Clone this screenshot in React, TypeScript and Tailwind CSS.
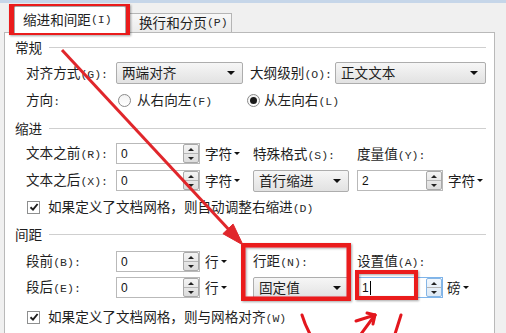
import React from "react";

function Acc({ k }: { k: string }) {
  return (
    <span className="font-['Liberation_Mono',monospace] text-[11.5px] text-[#2a2a2a]">{k}</span>
  );
}

function Tri({ size = "s" }: { size?: "s" | "m" }) {
  return size === "s" ? (
    <span className="inline-block w-0 h-0 ml-[2px] border-l-[3px] border-r-[3px] border-t-[3px] border-l-transparent border-r-transparent border-t-[#111]" />
  ) : (
    <span className="inline-block w-0 h-0 border-l-[4px] border-r-[4px] border-t-[4px] border-l-transparent border-r-transparent border-t-[#111]" />
  );
}

function Section({ title, className }: { title: string; className: string }) {
  return (
    <div className={`flex items-center h-[16px] pl-[10px] pr-[8px] ${className}`}>
      <span>{title}</span>
      <div className="flex-1 ml-[7px] h-[2px] border-t border-t-[#cfcfcf] border-b border-b-white" />
    </div>
  );
}

function Select({ text, w }: { text: string; w: string }) {
  return (
    <div
      className={`flex items-center h-[22px] ${w} border border-[#adadad] rounded-[2px] bg-linear-to-b from-[#f6f6f6] to-[#e2e2e2] pl-[5px] pr-[7px]`}
    >
      <span>{text}</span>
      <span className="ml-auto flex">
        <Tri size="m" />
      </span>
    </div>
  );
}

function Spin({ value, w, focus }: { value: string; w: string; focus?: boolean }) {
  return (
    <div
      className={`flex h-[21px] ${w} border ${focus ? "border-[#7eb4ea]" : "border-[#b9b9b9]"} bg-white`}
    >
      <div className="flex-1 flex items-center pl-[4px] text-[12px] font-['Liberation_Sans',sans-serif] text-[#111]">
        {value}
        {focus && <span className="ml-[1px] w-px h-[14px] bg-black" />}
      </div>
      <div
        className={`w-[16px] flex flex-col border ${focus ? "border-[#86b6e6] from-[#f2f7fc] to-[#dde9f5]" : "border-[#a9a9a9] from-[#f4f4f4] to-[#dcdcdc]"} rounded-[2px] bg-linear-to-b`}
      >
        <div className="flex-1 flex items-center justify-center border-b border-b-[#b5b5b5]">
          <span className="w-0 h-0 border-l-[3px] border-r-[3px] border-b-[3px] border-l-transparent border-r-transparent border-b-[#222]" />
        </div>
        <div className="flex-1 flex items-center justify-center">
          <span className="w-0 h-0 border-l-[3px] border-r-[3px] border-t-[3px] border-l-transparent border-r-transparent border-t-[#222]" />
        </div>
      </div>
    </div>
  );
}

function Radio({ checked }: { checked?: boolean }) {
  return (
    <div className="w-[13px] h-[13px] rounded-full border border-[#8a8a8a] bg-linear-to-b from-[#f2f2f2] to-white flex items-center justify-center">
      {checked && <div className="w-[7px] h-[7px] rounded-full bg-[#1a1a1a]" />}
    </div>
  );
}

function Check() {
  return (
    <div className="w-[13px] h-[13px] border border-[#8e8f8f] bg-white flex items-center justify-center">
      <svg width="10" height="10" viewBox="0 0 10 10">
        <path d="M1.5 5.2 L4 7.6 L8.6 2" stroke="#1c1c1c" strokeWidth="1.9" fill="none" />
      </svg>
    </div>
  );
}

function Unit({ text }: { text: string }) {
  return (
    <div className="w-[53px] pl-[5px] flex items-center">
      <span>{text}</span>
      <Tri />
    </div>
  );
}

export default function App() {
  return (
    <div className="relative w-[506px] h-[333px] overflow-hidden bg-[#f0f0f0] text-[13.6px] leading-none text-[#1e1e1e] font-['Noto_Sans_CJK_SC',sans-serif]">
      <div className="h-[3px] bg-[#c6d6e9]" />
      {/* tabs */}
      <div className="flex items-end h-[29px] pl-[14px]">
        <div className="relative z-10 -mb-px h-[27px] w-[112px] bg-white border-l border-t border-r border-[#a8a8a8] rounded-t-[2px] flex items-center pl-[8px]">
          缩进和间距<Acc k="(I)" />
        </div>
        <div className="ml-[2px] h-[19px] w-[104px] border-l border-t border-r border-[#b5b5b5] bg-linear-to-b from-[#f8f8f8] to-[#ebebeb] flex items-center pl-[10px]">
          换行和分页<Acc k="(P)" />
        </div>
      </div>
      {/* panel */}
      <div className="ml-[4px] w-[491px] h-[320px] border border-[#b9b9b9] bg-white flex flex-col">
        <Section title="常规" className="mt-[7px]" />
        <div className="mt-[6px] h-[22px] pl-[21px] flex items-center">
          <div className="w-[90px]">
            对齐方式<Acc k="(G):" />
          </div>
          <Select text="两端对齐" w="w-[127px]" />
          <div className="ml-[7px] w-[85px]">
            大纲级别<Acc k="(O):" />
          </div>
          <Select text="正文文本" w="w-[151px]" />
        </div>
        <div className="mt-[6px] h-[20px] pl-[21px] flex items-center">
          <div className="w-[92px]">
            方向<Acc k=":" />
          </div>
          <div className="w-[129px] flex items-center gap-[6px]">
            <Radio />
            <span>
              从右向左<Acc k="(F)" />
            </span>
          </div>
          <div className="flex items-center gap-[4px]">
            <Radio checked />
            <span>
              从左向右<Acc k="(L)" />
            </span>
          </div>
        </div>

        <Section title="缩进" className="mt-[11px]" />
        <div className="mt-[6px] h-[21px] pl-[21px] flex items-center">
          <div className="w-[90px]">
            文本之前<Acc k="(R):" />
          </div>
          <Spin value="0" w="w-[84px]" />
          <Unit text="字符" />
          <div className="w-[104px] pt-[2px]">
            特殊格式<Acc k="(S):" />
          </div>
          <div className="pt-[2px]">
            度量值<Acc k="(Y):" />
          </div>
        </div>
        <div className="mt-[6px] h-[21px] pl-[21px] flex items-center">
          <div className="w-[90px]">
            文本之后<Acc k="(X):" />
          </div>
          <Spin value="0" w="w-[84px]" />
          <Unit text="字符" />
          <Select text="首行缩进" w="w-[96px] h-[21px]" />
          <div className="ml-[8px]">
            <Spin value="2" w="w-[86px]" />
          </div>
          <div className="pl-[5px] flex items-center">
            <span>字符</span>
            <Tri />
          </div>
        </div>
        <div className="mt-[8px] h-[16px] pl-[22px] flex items-center gap-[8px]">
          <Check />
          <span>
            如果定义了文档网格，则自动调整右缩进<Acc k="(D)" />
          </span>
        </div>

        <Section title="间距" className="mt-[12px]" />
        <div className="mt-[8px] h-[21px] pl-[21px] flex items-center">
          <div className="w-[90px]">
            段前<Acc k="(B):" />
          </div>
          <Spin value="0" w="w-[84px]" />
          <Unit text="行" />
          <div className="w-[104px]">
            行距<Acc k="(N):" />
          </div>
          <div>
            设置值<Acc k="(A):" />
          </div>
        </div>
        <div className="mt-[5px] h-[21px] pl-[21px] flex items-center">
          <div className="w-[90px]">
            段后<Acc k="(E):" />
          </div>
          <Spin value="0" w="w-[84px]" />
          <Unit text="行" />
          <Select text="固定值" w="w-[96px] h-[21px]" />
          <div className="ml-[8px]">
            <Spin value="1" w="w-[86px]" focus />
          </div>
          <div className="pl-[4px] flex items-center">
            <span>磅</span>
            <Tri />
          </div>
        </div>
        <div className="mt-[11px] h-[16px] pl-[22px] flex items-center gap-[8px]">
          <Check />
          <span>
            如果定义了文档网格，则与网格对齐<Acc k="(W)" />
          </span>
        </div>
      </div>

      {/* annotations */}
      <svg className="absolute inset-0 pointer-events-none" width="506" height="333" viewBox="0 0 506 333">
        <defs>
          <filter id="sh" x="-10%" y="-10%" width="130%" height="130%">
            <feDropShadow dx="1" dy="1" stdDeviation="0.8" floodColor="#000" floodOpacity="0.35" />
          </filter>
        </defs>
        <g filter="url(#sh)" fill="none" stroke="#ea1a1f">
          <rect x="11.5" y="6.5" width="116" height="26" strokeWidth="5" />
          <rect x="243.25" y="245.25" width="105.5" height="53.5" strokeWidth="4.5" />
          <rect x="357" y="272" width="59" height="26" strokeWidth="4" />
        </g>
        <g stroke="#e0262b" fill="#e0262b">
          <line x1="62" y1="50" x2="232" y2="233" strokeWidth="3" />
          <polygon points="243,245 222.9,233.7 233.1,224.1" />
        </g>
        <g stroke="#e3161d" strokeWidth="3" fill="none" strokeLinecap="round" strokeLinejoin="round">
          <path d="M302 315 Q305 325 310 334" />
          <path d="M356 321 L375 315" />
          <path d="M375 315 L361 334" />
          <path d="M367 313 L375 315 L373 324" />
          <path d="M401 315 L395 334" />
        </g>
      </svg>
    </div>
  );
}
